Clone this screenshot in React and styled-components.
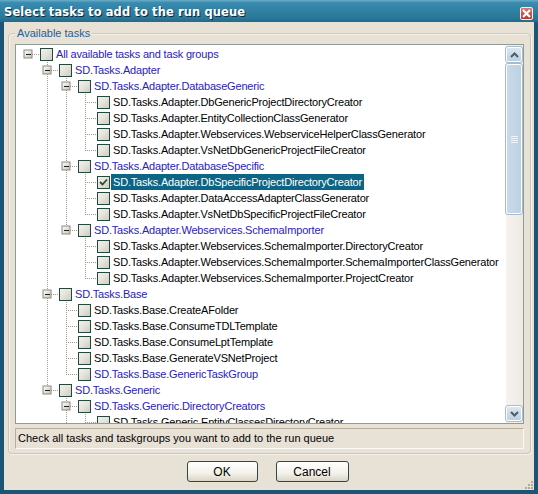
import React from 'react';
import styled, { createGlobalStyle } from 'styled-components';

const GlobalStyle = createGlobalStyle`
    html, body {
        margin: 0;
        padding: 0;
        background: #ffffff;
    }
`;

const tree = {
    text: 'All available tasks and task groups',
    group: true,
    children: [
        {
            text: 'SD.Tasks.Adapter',
            group: true,
            children: [
                {
                    text: 'SD.Tasks.Adapter.DatabaseGeneric',
                    group: true,
                    children: [
                        { text: 'SD.Tasks.Adapter.DbGenericProjectDirectoryCreator' },
                        { text: 'SD.Tasks.Adapter.EntityCollectionClassGenerator' },
                        { text: 'SD.Tasks.Adapter.Webservices.WebserviceHelperClassGenerator' },
                        { text: 'SD.Tasks.Adapter.VsNetDbGenericProjectFileCreator' },
                    ],
                },
                {
                    text: 'SD.Tasks.Adapter.DatabaseSpecific',
                    group: true,
                    children: [
                        { text: 'SD.Tasks.Adapter.DbSpecificProjectDirectoryCreator', checked: true, selected: true },
                        { text: 'SD.Tasks.Adapter.DataAccessAdapterClassGenerator' },
                        { text: 'SD.Tasks.Adapter.VsNetDbSpecificProjectFileCreator' },
                    ],
                },
                {
                    text: 'SD.Tasks.Adapter.Webservices.SchemaImporter',
                    group: true,
                    children: [
                        { text: 'SD.Tasks.Adapter.Webservices.SchemaImporter.DirectoryCreator' },
                        { text: 'SD.Tasks.Adapter.Webservices.SchemaImporter.SchemaImporterClassGenerator' },
                        { text: 'SD.Tasks.Adapter.Webservices.SchemaImporter.ProjectCreator' },
                    ],
                },
            ],
        },
        {
            text: 'SD.Tasks.Base',
            group: true,
            children: [
                { text: 'SD.Tasks.Base.CreateAFolder' },
                { text: 'SD.Tasks.Base.ConsumeTDLTemplate' },
                { text: 'SD.Tasks.Base.ConsumeLptTemplate' },
                { text: 'SD.Tasks.Base.GenerateVSNetProject' },
                { text: 'SD.Tasks.Base.GenericTaskGroup', group: true },
            ],
        },
        {
            text: 'SD.Tasks.Generic',
            group: true,
            children: [
                {
                    text: 'SD.Tasks.Generic.DirectoryCreators',
                    group: true,
                    children: [
                        { text: 'SD.Tasks.Generic.EntityClassesDirectoryCreator' },
                        { text: 'SD.Tasks.Generic.TypedListClassesDirectoryCreator' },
                    ],
                },
                { text: 'SD.Tasks.Generic.FileCreators', group: true },
            ],
        },
    ],
};

// flatten the tree into rows, remembering which guide lines continue
function flatten(node, level, trail, isLast, out) {
    out.push({ ...node, level, trail, isLast });
    const kids = node.children || [];
    kids.forEach((kid, i) => {
        const nextTrail = level === 0 ? [] : [...trail, !isLast];
        flatten(kid, level + 1, nextTrail, i === kids.length - 1, out);
    });
    return out;
}

const rows = flatten(tree, 0, [], true, []);

const INDENT = 19;

function Guides({ row }) {
    const { level, trail, isLast, children } = row;
    const width = 24 + INDENT * level;
    const cx = 12 + INDENT * level;
    const dot = { stroke: '#a09a90', strokeWidth: 1, strokeDasharray: '1 1' };
    return (
        <svg width={width} height="16" style={{ flex: 'none', display: 'block' }}>
            <defs>
                <linearGradient id="exp" x1="0" y1="0" x2="1" y2="1">
                    <stop offset="0" stopColor="#ffffff" />
                    <stop offset="1" stopColor="#c8c2b4" />
                </linearGradient>
            </defs>
            {trail.map((cont, a) =>
                cont ? <line key={a} x1={12 + INDENT * (a + 1) + 0.5} y1="0" x2={12 + INDENT * (a + 1) + 0.5} y2="16" {...dot} /> : null
            )}
            {level > 0 && (
                <line x1={cx + 0.5} y1="0" x2={cx + 0.5} y2={isLast ? 8 : 16} {...dot} />
            )}
            <line x1={cx} y1="8.5" x2={width} y2="8.5" {...dot} />
            {children && children.length > 0 && (
                <g>
                    <rect x={cx - 4} y="4" width="8" height="8" fill="url(#exp)" stroke="#8c8a80" />
                    <line x1={cx - 2} y1="8.5" x2={cx + 3} y2="8.5" stroke="#202020" />
                </g>
            )}
        </svg>
    );
}

function App() {
    return (
        <>
            <GlobalStyle />
            <Window>
                <TitleBar>
                    <Title>Select tasks to add to the run queue</Title>
                    <CloseButton>
                        <svg width="9" height="9" viewBox="0 0 9 9">
                            <path d="M1 1 L8 8 M8 1 L1 8" stroke="#ffffff" strokeWidth="2.2" />
                        </svg>
                    </CloseButton>
                </TitleBar>
                <Body>
                    <GroupBox>
                        <Legend>Available tasks</Legend>
                        <TreePanel>
                            <TreeList>
                                {rows.map((row, i) => (
                                    <Row key={i}>
                                        <Guides row={row} />
                                        <CheckBox>
                                            {row.checked && (
                                                <svg width="9" height="9" viewBox="0 0 9 9">
                                                    <path d="M1 4 L3.5 6.5 L8 1.5" fill="none" stroke="#2d4a2a" strokeWidth="1.8" />
                                                </svg>
                                            )}
                                        </CheckBox>
                                        <Label group={row.group} selected={row.selected}>{row.text}</Label>
                                    </Row>
                                ))}
                            </TreeList>
                            <ScrollBar>
                                <ScrollButton>
                                    <svg width="9" height="6" viewBox="0 0 9 6">
                                        <path d="M1 5 L4.5 1.5 L8 5" fill="none" stroke="#4a5d6a" strokeWidth="2" />
                                    </svg>
                                </ScrollButton>
                                <Thumb>
                                    <Grip />
                                </Thumb>
                                <Track />
                                <ScrollButton>
                                    <svg width="9" height="6" viewBox="0 0 9 6">
                                        <path d="M1 1 L4.5 4.5 L8 1" fill="none" stroke="#4a5d6a" strokeWidth="2" />
                                    </svg>
                                </ScrollButton>
                            </ScrollBar>
                        </TreePanel>
                        <StatusBox>Check all tasks and taskgroups you want to add to the run queue</StatusBox>
                    </GroupBox>
                    <ButtonRow>
                        <Button width={71}>OK</Button>
                        <Button width={73}>Cancel</Button>
                    </ButtonRow>
                    <ResizeGrip>
                        <svg width="10" height="10" viewBox="0 0 10 10">
                            {[[8, 2], [8, 5], [5, 5], [8, 8], [5, 8], [2, 8]].map(([x, y], i) => (
                                <rect key={i} x={x} y={y} width="2" height="2" fill="#b3aa9a" />
                            ))}
                        </svg>
                    </ResizeGrip>
                </Body>
            </Window>
        </>
    );
}

export default App;

const Window = styled.div`
    width: 538px;
    height: 494px;
    display: flex;
    flex-direction: column;
    background: #1c5676;
    font-family: "Liberation Sans", Arial, sans-serif;
    box-sizing: border-box;
    overflow: hidden;
`;

const TitleBar = styled.div`
    height: 22px;
    flex: none;
    display: flex;
    align-items: center;
    justify-content: space-between;
    padding: 0 5px 0 4px;
    background: linear-gradient(to bottom, #6aaecb 0%, #3a8cae 12%, #2f80a2 50%, #2a7697 85%, #23698a 100%);
`;

const Title = styled.div`
    color: #ffffff;
    font-family: "DejaVu Sans", sans-serif;
    font-weight: bold;
    font-size: 11.5px;
    letter-spacing: 0.1px;
    text-shadow: 1px 1px 0 #0b2a3a;
    padding-top: 1px;
`;

const CloseButton = styled.div`
    width: 11px;
    height: 11px;
    display: flex;
    align-items: center;
    justify-content: center;
    background: linear-gradient(to bottom, #d97a70, #b8382c);
    border: 1px solid #f4f0ec;
    border-radius: 2px;
    margin-top: 4px;
`;

const Body = styled.div`
    position: relative;
    flex: 1;
    margin: 0 4px 4px 4px;
    background: #e8e1d5;
    display: flex;
    flex-direction: column;
    padding: 11px 3px 0 4px;
`;

const GroupBox = styled.div`
    position: relative;
    border: 1px solid #cfc6b6;
    box-shadow: inset 1px 1px 0 #f6f2ea, 1px 1px 0 #f6f2ea;
    border-radius: 4px;
    padding: 10px 6px 4px 6px;
    display: flex;
    flex-direction: column;
    gap: 4px;
`;

const Legend = styled.div`
    position: absolute;
    top: -7px;
    left: 6px;
    padding: 0 2px;
    background: #e8e1d5;
    color: #1f5f9a;
    font-size: 11px;
    line-height: 13px;
`;

const TreePanel = styled.div`
    height: 378px;
    display: flex;
    background: #ffffff;
    border: 1px solid #8e9c98;
`;

const TreeList = styled.div`
    flex: 1;
    overflow: hidden;
    padding-top: 1px;
`;

const Row = styled.div`
    height: 16px;
    display: flex;
    align-items: center;
    white-space: nowrap;
`;

const CheckBox = styled.span`
    flex: none;
    width: 11px;
    height: 11px;
    border: 1px solid #24483c;
    background: linear-gradient(135deg, #f2f1ea 0%, #e4e2da 50%, #cfcbbf 100%);
    display: flex;
    align-items: center;
    justify-content: center;
    margin-right: 1px;
`;

const Label = styled.span`
    height: 16px;
    line-height: 16px;
    padding: 0 2px;
    font-size: 11px;
    letter-spacing: -0.18px;
    color: ${p => (p.selected ? '#ffffff' : p.group ? '#2a22b8' : '#000000')};
    background: ${p => (p.selected ? '#0c6585' : 'transparent')};
`;

const ScrollBar = styled.div`
    width: 16px;
    flex: none;
    display: flex;
    flex-direction: column;
    padding: 2px 1px 2px 0;
    background: linear-gradient(to right, #f5f3ee, #eeebe4);
    border-left: 1px solid #ffffff;
`;

const ScrollButton = styled.div`
    height: 13px;
    flex: none;
    display: flex;
    align-items: center;
    justify-content: center;
    background: linear-gradient(to bottom, #dbe7f1, #bcd0e2);
    border: 1px solid #ffffff;
    outline: 1px solid #a9bccb;
    border-radius: 2px;
`;

const Thumb = styled.div`
    height: 148px;
    flex: none;
    margin-top: 2px;
    display: flex;
    align-items: center;
    justify-content: center;
    background: linear-gradient(to right, #c9dbea, #bcd1e3);
    border: 1px solid #ffffff;
    outline: 1px solid #a6bbcc;
    border-radius: 2px;
`;

const Grip = styled.div`
    width: 7px;
    height: 7px;
    background: repeating-linear-gradient(to bottom, #eef4f9 0 1px, transparent 1px 2px);
`;

const Track = styled.div`
    flex: 1;
`;

const StatusBox = styled.div`
    height: 19px;
    display: flex;
    align-items: center;
    padding-left: 2px;
    border: 1px solid;
    border-color: #b8ae9e #fbf9f5 #fbf9f5 #b8ae9e;
    font-size: 11px;
    line-height: 13px;
    color: #000000;
    white-space: nowrap;
    overflow: hidden;
`;

const ButtonRow = styled.div`
    display: flex;
    justify-content: center;
    gap: 18px;
    margin-top: 7px;
    padding-right: 4px;
`;

const Button = styled.div`
    width: ${p => p.width}px;
    height: 21px;
    box-sizing: border-box;
    display: flex;
    align-items: center;
    justify-content: center;
    border: 1px solid #2f4a40;
    border-radius: 3px;
    background: linear-gradient(to bottom, #ffffff 0%, #f3f1ea 60%, #d9d4c6 100%);
    font-size: 12px;
    line-height: 14px;
    color: #000000;
`;

const ResizeGrip = styled.div`
    position: absolute;
    right: 1px;
    bottom: 1px;
    line-height: 0;
`;
